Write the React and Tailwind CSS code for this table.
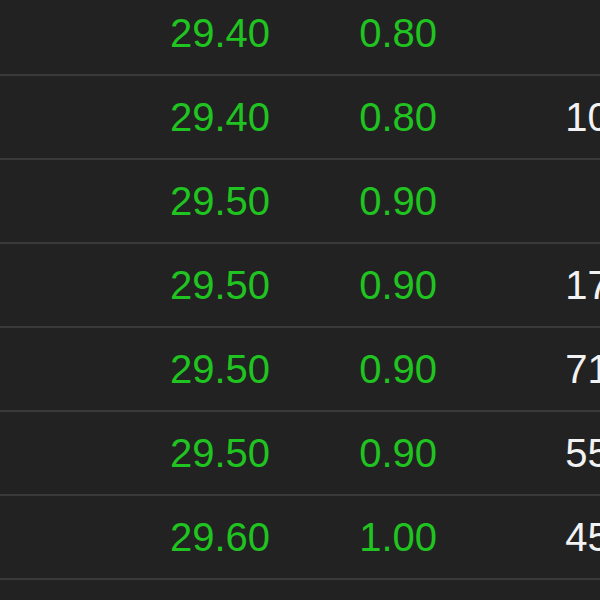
import React from "react";

const rows = [
  ["29.40", "0.80", "8"],
  ["29.40", "0.80", "100"],
  ["29.50", "0.90", "5"],
  ["29.50", "0.90", "170"],
  ["29.50", "0.90", "710"],
  ["29.50", "0.90", "550"],
  ["29.60", "1.00", "450"],
  ["29.60", "1.00", "9"],
];

export default function App() {
  return (
    <div className="w-[600px] h-[600px] overflow-hidden bg-[#222222]" style={{ fontFamily: '"Liberation Sans", Arial, sans-serif' }}>
      <div className="-mt-[8px] w-[640px]">
        {rows.map((r, i) => (
          <div key={i} className="flex items-center h-[84px] border-b-2 border-[#3a3a3a] text-[40px] leading-none">
            <div className="w-[270px] text-right text-[#20c420]">{r[0]}</div>
            <div className="w-[167px] text-right text-[#20c420]">{r[1]}</div>
            <div className="w-[195px] text-right text-[#f2f2f2]">{r[2]}</div>
          </div>
        ))}
      </div>
    </div>
  );
}
